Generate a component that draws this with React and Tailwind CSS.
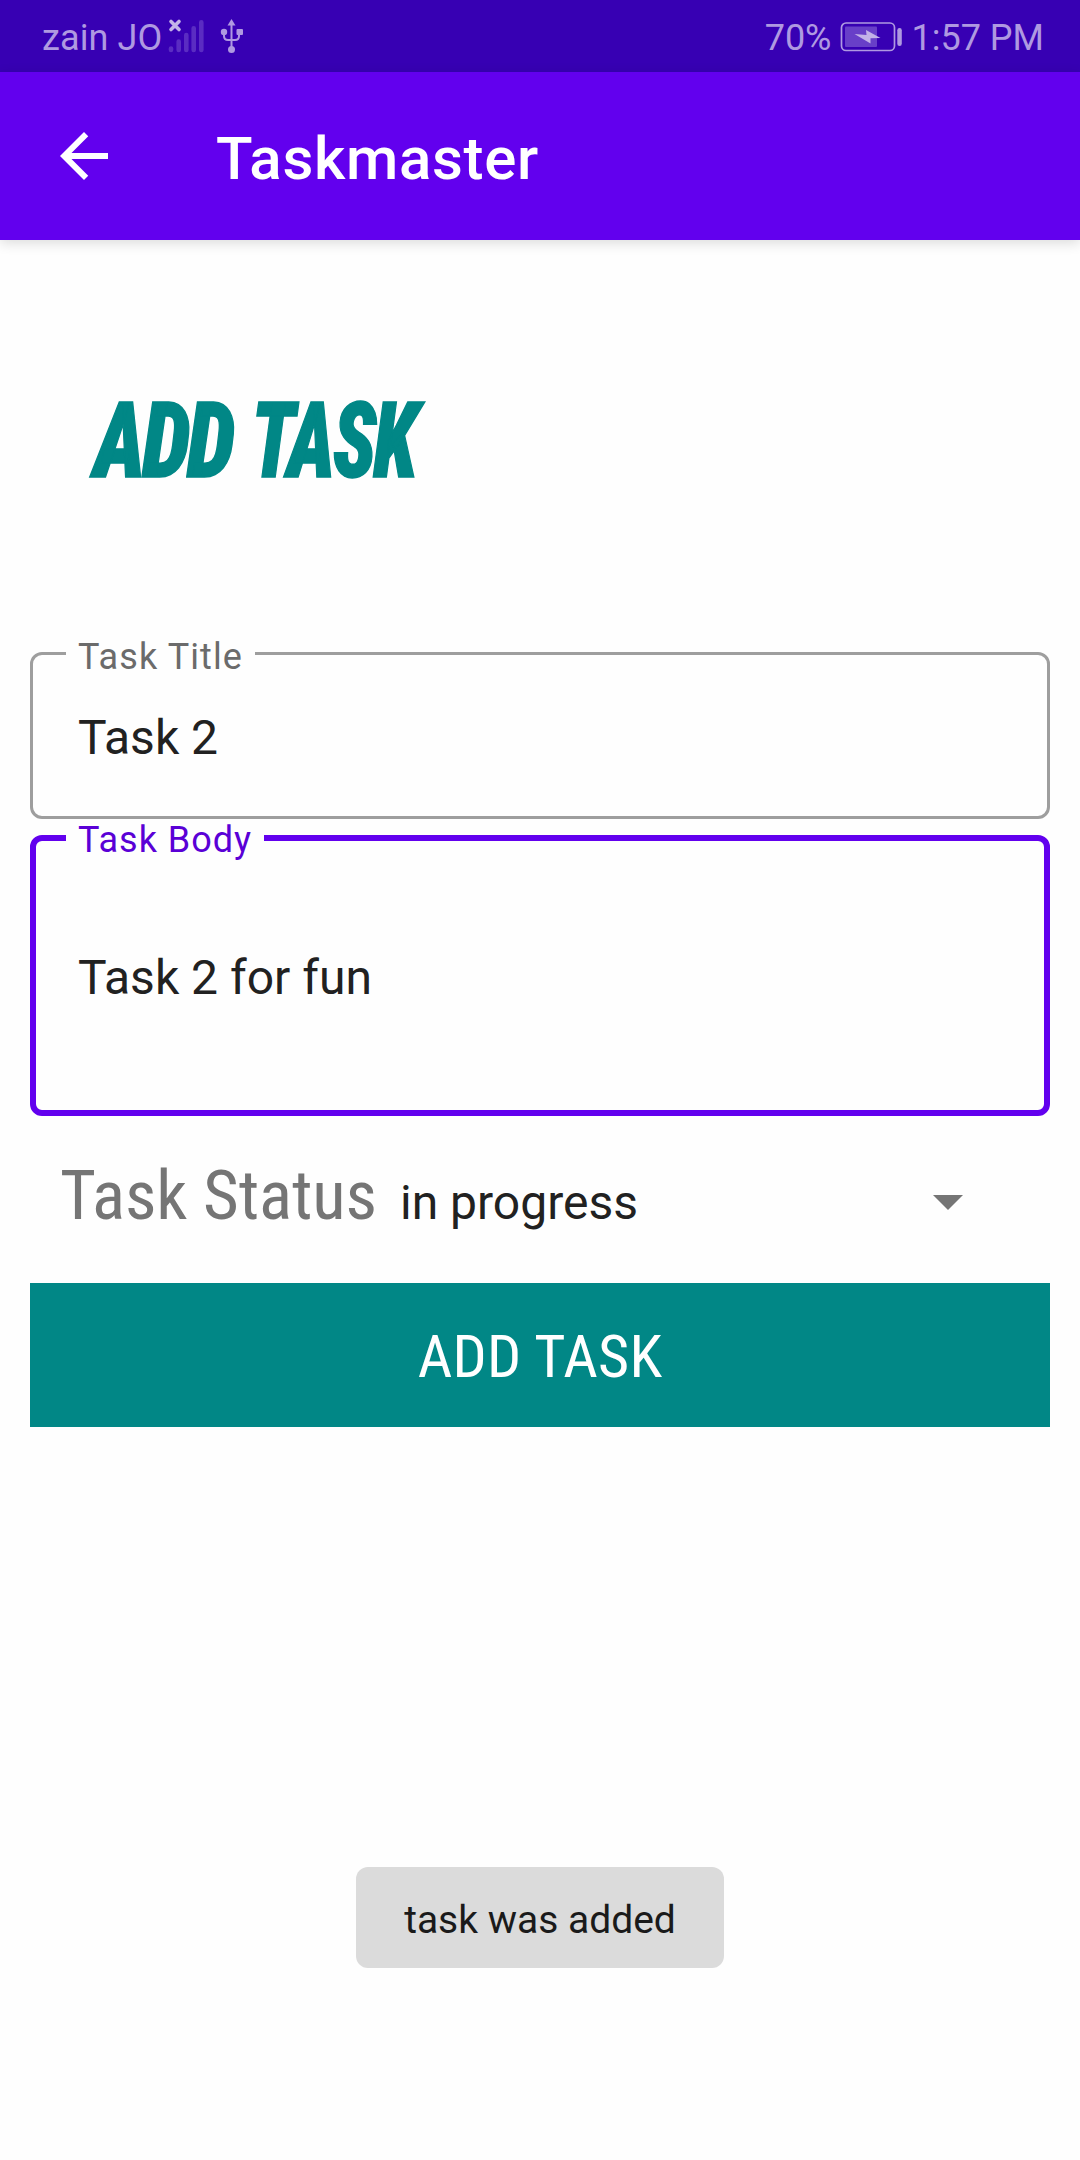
import React from "react";

function StatusBar() {
  return (
    <div className="flex h-[72px] items-center bg-[#3700b3] pt-[3px] pl-[42px] pr-[36px] text-[36px] leading-[42px] text-[#af99e1]">
      <span className="whitespace-nowrap tracking-[0.1px]">zain JO</span>
      <svg className="-mt-[3px] ml-[6px] h-[36px] w-[37px]" viewBox="0 0 37 36" fill="none" strokeLinecap="round">
        <path d="M3 3.500l8 8M11 3.500l-8 8" stroke="#c3b2e8" strokeWidth="3.600" />
        <path d="M3 30.500v1.500M10.700 23.500v8.500M18.300 17v15M25.700 10.200v21.800M33.300 4.200v27.800" stroke="#5a2cc2" strokeWidth="4.600" />
      </svg>
      <svg className="-mt-[3px] ml-[15px] h-[36px] w-[24px]" viewBox="0 0 24 36" fill="none" stroke="#af99e1" strokeWidth="2">
        <path d="M11.500 7v24M4 15v3q0 4 4 4h7q4 0 4-4v-3" />
        <path d="M11.500 1l4 6.500h-8z" fill="#af99e1" stroke="none" />
        <circle cx="4" cy="14" r="3.200" fill="#af99e1" stroke="none" />
        <rect x="16.500" y="11" width="6.500" height="6" rx="1" fill="#af99e1" stroke="none" />
        <circle cx="11.500" cy="31.500" r="3.500" fill="#af99e1" stroke="none" />
      </svg>
      <span className="ml-auto whitespace-nowrap">70%</span>
      <svg className="-mt-[2px] ml-[8px] h-[30px] w-[62px]" viewBox="0 0 62 30" fill="none">
        <rect x="1.500" y="1" width="53" height="27.500" rx="4.500" stroke="#af99e1" strokeWidth="1.700" />
        <rect x="5" y="4.500" width="32" height="20.500" rx="1" fill="#683fc8" />
        <path d="M14.500 12l12 1-.5-5L40.500 16l-10 .3 0 5.200z" fill="#c3b2e8" />
        <rect x="57.300" y="6" width="4.500" height="18" rx="2.200" fill="#af99e1" />
      </svg>
      <span className="ml-[10px] whitespace-nowrap">1:57 PM</span>
    </div>
  );
}

function AppBar() {
  return (
    <header className="flex h-[168px] items-center bg-[#6200ee] pl-[60px] text-white shadow-[0_3px_12px_rgba(0,0,0,0.14)]">
      <svg className="h-[48px] w-[48px]" viewBox="0 0 16 16" fill="white">
        <path d="M16 7H3.830l5.590-5.590L8 0 0 8l8 8 1.410-1.410L3.830 9H16z" />
      </svg>
      <h1 className="ml-[108px] pt-[5px] text-[60px] font-medium leading-[70px] tracking-[0.7px]">Taskmaster</h1>
    </header>
  );
}

export default function App() {
  return (
    <div className="relative flex h-[2160px] w-[1080px] flex-col bg-[#fefefe] font-['Roboto',sans-serif] text-[#212121]">
      <StatusBar />
      <AppBar />
      <main className="flex flex-col px-[30px]">
        <h2 className="mt-[141px] ml-[64px] flex h-[120px] whitespace-nowrap text-[106px] font-black italic leading-[120px] text-[#018786] [-webkit-text-stroke:1.500px_#018786] [font-stretch:75%]">
          <span className="w-[157px] shrink-0"><span className="inline-block origin-left scale-x-[0.83] tracking-[-4px]">ADD</span></span>
          <span className="shrink-0"><span className="inline-block origin-left scale-x-[0.77] tracking-[-3.5px]">TASK</span></span>
        </h2>

        <div className="relative mt-[151px] flex h-[167px] items-center rounded-[12px] border-[3px] border-[#9e9e9e] pl-[45px] pt-[4px] text-[48px] leading-[60px]">
          <span className="absolute left-[33px] top-[-19px] h-[42px] w-[189px] whitespace-nowrap bg-[#fefefe] pl-[12px] text-[36px] leading-[42px] tracking-[1.1px] text-[#6b6b6b]">Task Title</span>
          Task 2
        </div>

        <div className="relative mt-[16px] flex h-[281px] items-center rounded-[12px] border-[6px] border-[#6200ee] pl-[42px] pt-[4px] text-[48px] leading-[60px]">
          <span className="absolute left-[30px] top-[-22px] h-[42px] w-[198px] whitespace-nowrap bg-[#fefefe] pl-[12px] text-[36px] leading-[42px] tracking-[1px] text-[#5a00d6]">Task Body</span>
          Task 2 for fun
        </div>

        <div className="flex h-[167px] items-baseline pl-[30px] pt-[40px] leading-[80px]">
          <span className="w-[340px] text-[69px] tracking-[-0.1px] text-[#757575] [font-stretch:75%]">Task Status</span>
          <span className="text-[48px]">in progress</span>
          <svg className="ml-auto mr-[87px] h-[15px] w-[30px] -translate-y-[9px]" viewBox="0 0 30 15" fill="#757575"><path d="M0 0h30L15 15z" /></svg>
        </div>

        <button className="flex h-[144px] items-center justify-center bg-[#018786] pt-[4px] text-[60px] leading-[70px] tracking-[0.2px] text-white [font-stretch:75%]">ADD TASK</button>
      </main>

      <div className="absolute left-[356px] top-[1867px] flex h-[101px] w-[368px] items-center justify-center rounded-[12px] bg-[#dbdbdb] pt-[4px] text-[39px] leading-[46px] text-[#1a1a1a]">task was added</div>
    </div>
  );
}
